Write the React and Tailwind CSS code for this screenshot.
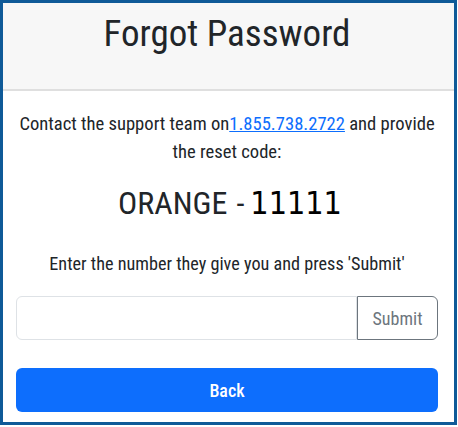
import React from "react";

export default function App() {
  return (
    <div className="w-[458px] h-[427px] bg-white font-['Roboto',sans-serif] text-[#212529]">
      <div className="w-[457px] h-[425px] border-[3px] border-[#0f5a98] flex flex-col">
        <div className="h-[88px] bg-[#f7f7f7] border-b-2 border-[#dfdfdf] flex justify-center pt-[7px] pr-[3px]">
          <h1 className="text-[37px] leading-[48px] font-stretch-condensed">Forgot Password</h1>
        </div>
        <div className="flex flex-col pl-[13px] pr-[16px] pt-[19px]">
          <p className="text-center text-[18.6px] leading-[28px] font-stretch-condensed">
            Contact the support team on
            <a href="#" className="text-[#0d6efd] underline">1.855.738.2722</a> and provide the reset code:
          </p>
          <div className="flex justify-center items-baseline mt-[17px] text-[32px] leading-[40px] pl-[6px]">
            <span className="font-stretch-condensed">ORANGE</span>
            <span className="font-stretch-condensed ml-[9px] mr-[6px]">-</span>
            <span className="text-black font-['DejaVu_Sans_Condensed','DejaVu_Sans',sans-serif] text-[32px] font-stretch-condensed">11111</span>
          </div>
          <p className="text-center text-[18.2px] leading-[28px] mt-[27px] font-stretch-condensed">
            Enter the number they give you and press 'Submit'
          </p>
          <div className="flex mt-[18px] h-[44px]">
            <input className="flex-1 border border-[#dee2e6] rounded-l-[6px] px-3 outline-none" />
            <button className="w-[81px] border border-[#6c757d] rounded-r-[6px] text-[#6c757d] text-[18px] font-stretch-condensed">
              Submit
            </button>
          </div>
          <button className="mt-[28px] h-[44px] bg-[#0d6efd] rounded-[6px] text-white text-[18px] font-medium font-stretch-condensed">
            Back
          </button>
        </div>
      </div>
    </div>
  );
}
